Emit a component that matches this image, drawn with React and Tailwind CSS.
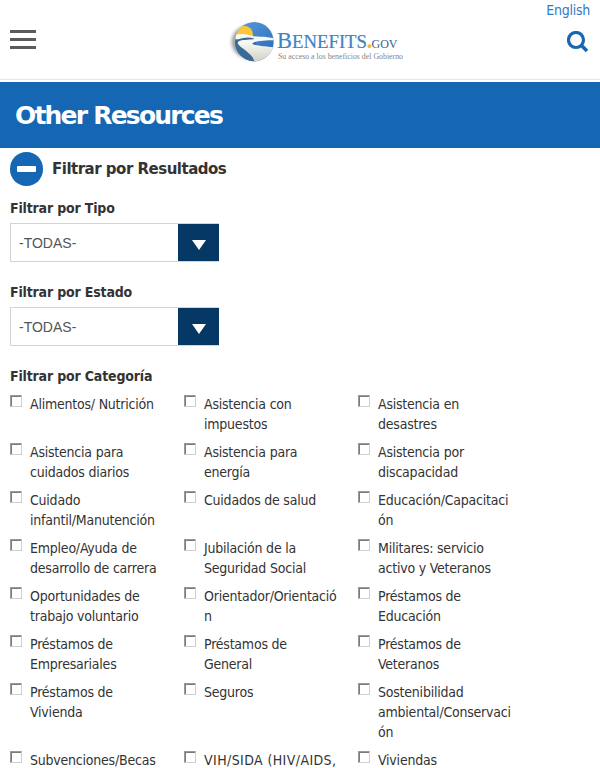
import React from "react";

const categories = [
  [["Alimentos/ Nutrición"], ["Asistencia con", "impuestos"], ["Asistencia en", "desastres"]],
  [["Asistencia para", "cuidados diarios"], ["Asistencia para", "energía"], ["Asistencia por", "discapacidad"]],
  [["Cuidado", "infantil/Manutención"], ["Cuidados de salud"], ["Educación/Capacitaci", "ón"]],
  [["Empleo/Ayuda de", "desarrollo de carrera"], ["Jubilación de la", "Seguridad Social"], ["Militares: servicio", "activo y Veteranos"]],
  [["Oportunidades de", "trabajo voluntario"], ["Orientador/Orientació", "n"], ["Préstamos de", "Educación"]],
  [["Préstamos de", "Empresariales"], ["Préstamos de", "General"], ["Préstamos de", "Veteranos"]],
  [["Préstamos de", "Vivienda"], ["Seguros"], ["Sostenibilidad", "ambiental/Conservaci", "ón"]],
  [["Subvenciones/Becas"], ["VIH/SIDA (HIV/AIDS,"], ["Viviendas"]],
];

function Checkbox() {
  return (
    <span className="mt-px block h-3 w-3 shrink-0 border-t border-l border-r border-b border-t-[#9a9a9a] border-l-[#9a9a9a] border-r-[#cfcfcf] border-b-[#cfcfcf] bg-white">
      <span className="block h-[10px] w-[10px] border-t border-l border-[#7b7b7b]" />
    </span>
  );
}

function Select() {
  return (
    <div className="flex h-[39px] w-[209px] border border-r-0 border-[#d3d3d3] bg-white">
      <div className="flex-1 pl-2 font-['Liberation_Sans',Arial,sans-serif] text-[14px] leading-[38px] text-[#555]">-TODAS-</div>
      <div className="flex w-[41px] items-center justify-center bg-[#063866]">
        <svg width="14" height="10" viewBox="0 0 14 10" className="mt-1"><path d="M0 0h14L7 10z" fill="#fff" /></svg>
      </div>
    </div>
  );
}

function FilterHeading({ className, children }) {
  return (
    <h3 className={`text-[14px] leading-5 font-bold tracking-[-0.17px] ${className}`}>
      {children}
    </h3>
  );
}

function Logo() {
  return (
    <svg width="176" height="42" viewBox="227 20 176 42" className="block">
      <defs>
        <linearGradient id="sky" x1="0" y1="0" x2="0.6" y2="1">
          <stop offset="0" stopColor="#5e9ddb" />
          <stop offset="1" stopColor="#2b6cb8" />
        </linearGradient>
        <linearGradient id="road" x1="0" y1="0" x2="0" y2="1">
          <stop offset="0.3" stopColor="#f7f7f4" />
          <stop offset="1" stopColor="#cfcdc0" />
        </linearGradient>
        <radialGradient id="shade">
          <stop offset="0.75" stopColor="#aaa" />
          <stop offset="1" stopColor="#fff" stopOpacity="0" />
        </radialGradient>
        <clipPath id="disc"><ellipse cx="103" cy="95" rx="58" ry="59" /></clipPath>
      </defs>
      <ellipse cx="250" cy="42" rx="22.500" ry="20.500" fill="url(#shade)" />
      <g transform="translate(220 10) scale(.33333)" clipPath="url(#disc)">
        <rect x="40" y="30" width="124" height="128" fill="url(#sky)" />
        <circle cx="72" cy="74" r="27" fill="#fbc638" />
        <path d="M40 78L106 80L112 156H40z" fill="#3a6a98" />
        <path d="M40 74L66 72C84 72 94 80 122 80C138 80 152 82 164 85V91C140 91 112 92 98 99C94 105 120 108 164 112V160H102C106 146 90 132 72 118C56 106 46 98 60 92C72 88 92 90 104 86C88 80 72 82 56 88L40 88z" fill="url(#road)" />
      </g>
      <g fontFamily="Liberation Serif, serif">
        <text x="277" y="48" fontSize="24" fill="#4182c3" stroke="#4182c3" strokeWidth=".2" textLength="15" lengthAdjust="spacingAndGlyphs">B</text>
        <text x="292" y="48" fontSize="18" fill="#4182c3" stroke="#4182c3" strokeWidth=".2" textLength="75" lengthAdjust="spacingAndGlyphs">ENEFITS</text>
        <text x="366.500" y="48" fontSize="24" fontWeight="bold" fill="#f6b82f">.</text>
        <text x="371.500" y="48" fontSize="13" fill="#376390" textLength="26" lengthAdjust="spacingAndGlyphs">GOV</text>
        <text x="278" y="59" fontSize="7.500" fill="#858585" textLength="125" lengthAdjust="spacingAndGlyphs">Su acceso a los beneficios del Gobierno</text>
      </g>
    </svg>
  );
}

export default function App() {
  return (
    <div className="h-[768px] w-[600px] overflow-hidden bg-white font-['DejaVu_Sans_Condensed','DejaVu_Sans',Tahoma,sans-serif] text-[#333]">
      <header className="flex h-20 justify-between border-b border-[#e7e7e7] px-[10px]">
        <div className="mt-[30px] flex h-[19px] w-[218px] flex-col justify-between">
          <span className="h-[3px] w-[26px] bg-[#5b5b5b]" />
          <span className="h-[3px] w-[26px] bg-[#5b5b5b]" />
          <span className="h-[3px] w-[26px] bg-[#5b5b5b]" />
        </div>
        <div className="mt-5 -ml-px"><Logo /></div>
        <div className="flex flex-1 flex-col items-end">
          <a className="h-5 text-[14px] leading-5 tracking-[-0.25px] text-[#337ac4]">English</a>
          <svg width="22" height="22" viewBox="0 0 22 22" className="mt-[11px] mr-[1px]" fill="none" stroke="#1666b2">
            <circle cx="9" cy="9" r="7.500" strokeWidth="3.200" />
            <path d="M14 14L20 20" strokeWidth="3.600" />
          </svg>
        </div>
      </header>

      <div className="mt-0.5 flex h-[66px] items-center bg-[#1566b3] pt-0.5 pl-[15px]">
        <h1 className="font-['DejaVu_Sans',Verdana,sans-serif] text-[25px] leading-8 font-bold tracking-[-1.8px] whitespace-nowrap text-white">Other Resources</h1>
      </div>

      <main className="px-[10px]">
        <div className="flex h-[50px] items-start pt-1">
          <span className="flex h-[34px] w-[33px] items-center justify-center rounded-full bg-[#1566b3]">
            <span className="h-[6px] w-[19px] rounded-[1px] bg-white" />
          </span>
          <h2 className="ml-[9px] font-['DejaVu_Sans',Verdana,sans-serif] text-[15px] leading-[34px] font-bold tracking-[-0.5px]">Filtrar por Resultados</h2>
        </div>
        <FilterHeading className="h-[25px]">Filtrar por Tipo</FilterHeading>
        <Select />
        <FilterHeading className="mt-5 h-[25px]">Filtrar por Estado</FilterHeading>
        <Select />
        <FilterHeading className="mt-5 h-7">Filtrar por Categoría</FilterHeading>

        <div className="grid grid-cols-[174px_174px_174px] gap-y-2">
          {categories.flat().map((lines, i) => (
            <label key={i} className="flex items-start">
              <Checkbox />
              <span className="ml-2 text-[14px] leading-5 tracking-[-0.22px] whitespace-nowrap">
                {lines.map((line) => (
                  <span key={line} className={line.startsWith("VIH") ? "block tracking-[0.4px]" : "block"}>{line}</span>
                ))}
              </span>
            </label>
          ))}
        </div>
      </main>
    </div>
  );
}
